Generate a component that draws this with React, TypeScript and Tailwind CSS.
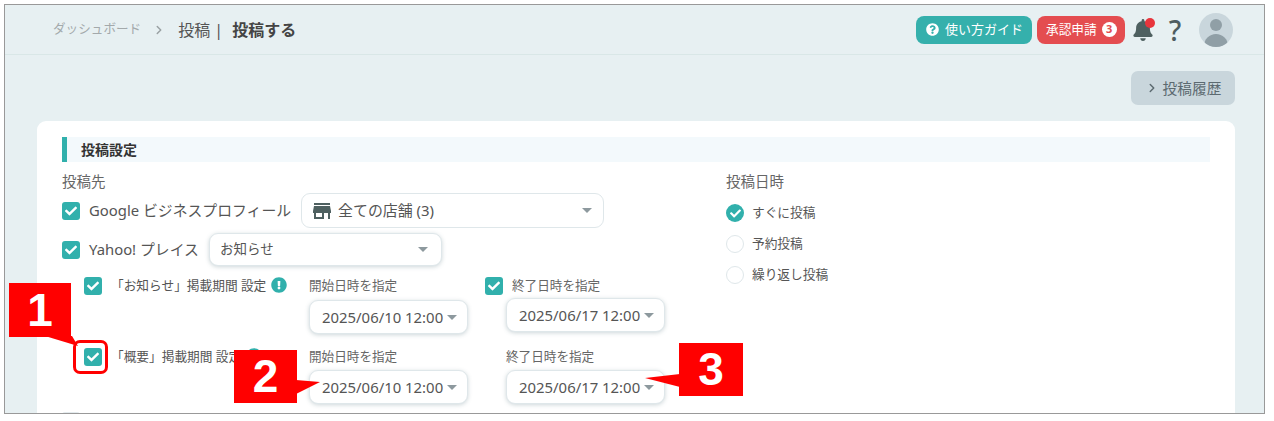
import React from 'react';
import { FaBell, FaCheck, FaExclamationCircle, FaQuestionCircle } from 'react-icons/fa';
import { MdStore } from 'react-icons/md';
import { ChevronRight } from 'lucide-react';

const fieldStyles = "flex items-center bg-white border border-[#dfe7ea] rounded-[9px] shadow-[0_1px_4px_rgba(90,120,130,0.3)] text-[#555]";

const Caret: React.FC = () => (
  <span className="w-0 h-0 border-x-[5px] border-x-transparent border-t-[5px] border-t-[#8d999e]" />
);

const Check: React.FC<{ faint?: boolean }> = ({ faint }) => (
  <span className={`flex items-center justify-center w-[18px] h-[18px] shrink-0 rounded-[3px] text-white ${faint ? 'bg-[#e4ebee]' : 'bg-[#31b0ac]'}`}>
    <FaCheck size={12} />
  </span>
);

const DateField: React.FC<{ value: string }> = ({ value }) => (
  <div className={`${fieldStyles} w-[159px] h-[34px] pl-[12px] pr-[10px] justify-between text-[14.9px]`}>
    <span>{value}</span>
    <Caret />
  </div>
);

const Radio: React.FC<{ label: string; checked?: boolean }> = ({ label, checked }) => (
  <div className="flex items-center gap-2 h-[18px] text-[12.7px] text-[#555]">
    {checked ? (
      <span className="flex items-center justify-center w-[18px] h-[18px] rounded-full bg-[#31b0ac] text-white">
        <FaCheck size={11} />
      </span>
    ) : (
      <span className="w-[18px] h-[18px] rounded-full bg-white border border-[#dfe7ea]" />
    )}
    <span>{label}</span>
  </div>
);

const Badge: React.FC<{ n: string; className: string }> = ({ n, className }) => (
  <div className={`absolute flex items-center justify-center bg-[#ff0000] text-white font-bold text-[46px] font-['Liberation_Sans',sans-serif] ${className}`}>
    {n}
  </div>
);

export default function App() {
  return (
    <div className="relative w-[1274px] h-[421px] bg-white overflow-hidden font-['Noto_Sans','Noto_Sans_CJK_JP',sans-serif]">
      <div className="absolute left-[4px] top-[4px] w-[1261px] h-[410px] border border-[#999] bg-[#e7f0f2] overflow-hidden">
        {/* header */}
        <div className="flex items-center justify-between h-[50px] pl-[48px] pr-[31px] border-b border-[#d9e7e7]">
          <div className="flex items-center">
            <span className="text-[12.6px] text-[#a3a9ab]">ダッシュボード</span>
            <ChevronRight size={14} strokeWidth={2.5} className="ml-[11px] mr-[12px] text-[#9aa1a3]" />
            <span className="text-[16px] text-[#555]">投稿 |</span>
            <span className="ml-[9px] text-[16px] font-bold text-[#444]">投稿する</span>
          </div>
          <div className="flex items-center">
            <div className="flex items-center gap-[6px] h-[28px] w-[116px] pl-[10px] rounded-[8px] bg-[#35b0ac] text-white text-[13px]">
              <FaQuestionCircle size={13} />
              <span>使い方ガイド</span>
            </div>
            <div className="flex items-center gap-[5px] h-[28px] w-[88px] ml-[5px] pl-[9px] rounded-[8px] bg-[#e44d50] text-white text-[12.7px]">
              <span>承認申請</span>
              <span className="flex items-center justify-center w-[15px] h-[15px] rounded-full bg-white text-[#e44d50] text-[11px] font-bold">3</span>
            </div>
            <div className="relative ml-[7px] w-[23px]">
              <FaBell size={22} className="text-[#4e6060]" />
              <span className="absolute -top-[1px] right-0 w-[10px] h-[10px] rounded-full bg-[#e8353c]" />
            </div>
            <span className="ml-[11px] w-[18px] text-center text-[28px] leading-none font-medium text-[#4e5c5f]">?</span>
            <div className="relative ml-[15px] w-[34px] h-[34px] rounded-full bg-[#c9d6dc] overflow-hidden">
              <span className="absolute left-[11px] top-[6px] w-[12px] h-[12px] rounded-full bg-[#909fa6]" />
              <span className="absolute left-[5px] top-[21px] w-[24px] h-[16px] rounded-t-[12px] bg-[#909fa6]" />
            </div>
          </div>
        </div>

        <div className="flex justify-end mt-[16px] mr-[29px]">
          <div className="flex items-center justify-center gap-[4px] w-[104px] h-[34px] rounded-[7px] bg-[#c9d6dc] text-[#5c6a70] text-[14.7px]">
            <ChevronRight size={14} strokeWidth={2.5} />
            <span>投稿履歴</span>
          </div>
        </div>

        {/* main card */}
        <div className="mt-[16px] ml-[32px] mr-[29px] h-[320px] pt-[16px] px-[25px] bg-white rounded-[9px]">
          <div className="flex items-center h-[25px] pl-[14px] border-l-[5px] border-[#31b0ac] bg-[#f3f9fc] text-[14px] font-bold text-[#333]">
            投稿設定
          </div>
          <div className="flex">
            <div className="w-[664px] shrink-0">
              <div className="mt-[9px] h-[20px] leading-[20px] text-[14.5px] text-[#666]">投稿先</div>
              <div className="flex items-center mt-[2px] h-[35px]">
                <Check />
                <span className="ml-[9px] text-[14.85px] text-[#555]">Google ビジネスプロフィール</span>
                <div className="flex items-center justify-between ml-[10px] w-[303px] h-[35px] pl-[8px] pr-[11px] bg-white border border-[#dfe7ea] rounded-[9px] text-[#555]">
                  <div className="flex items-center gap-[4px] text-[14.9px]">
                    <MdStore size={24} className="text-[#4e6060]" />
                    <span>全ての店舗 (3)</span>
                  </div>
                  <Caret />
                </div>
              </div>
              <div className="flex items-center mt-[5px] h-[33px]">
                <Check />
                <span className="ml-[9px] text-[14.85px] text-[#555]">Yahoo! プレイス</span>
                <div className={`${fieldStyles} ml-[10px] w-[233px] h-[33px] pl-[10px] pr-[13px] justify-between text-[13.5px]`}>
                  <span>お知らせ</span>
                  <Caret />
                </div>
              </div>

              {/* period rows */}
              <div className="flex mt-[10px] ml-[22px]">
                <div className="flex items-center w-[225px] h-[20px] text-[12.7px] text-[#555]">
                  <Check />
                  <span className="ml-[9px]">「お知らせ」掲載期間 設定</span>
                  <FaExclamationCircle size={16} className="ml-[5px] -mt-[3px] text-[#31b0ac]" />
                </div>
                <div className="w-[176px]">
                  <div className="h-[20px] leading-[20px] text-[12.6px] text-[#666]">開始日時を指定</div>
                  <div className="mt-[4px]"><DateField value="2025/06/10 12:00" /></div>
                </div>
                <div>
                  <div className="flex items-center gap-[9px] h-[20px] text-[12.6px] text-[#666]">
                    <Check />
                    <span>終了日時を指定</span>
                  </div>
                  <div className="mt-[2px] ml-[21px]"><DateField value="2025/06/17 12:00" /></div>
                </div>
              </div>
              <div className="flex mt-[13px] ml-[22px]">
                <div className="flex items-center w-[225px] h-[20px] text-[12.7px] text-[#555]">
                  <Check />
                  <span className="ml-[9px]">「概要」掲載期間 設定</span>
                  <FaExclamationCircle size={16} className="ml-[5px] -mt-[3px] text-[#31b0ac]" />
                </div>
                <div className="w-[176px]">
                  <div className="h-[20px] leading-[20px] text-[12.6px] text-[#666]">開始日時を指定</div>
                  <div className="mt-[3px]"><DateField value="2025/06/10 12:00" /></div>
                </div>
                <div>
                  <div className="h-[20px] leading-[20px] ml-[21px] text-[12.6px] text-[#666]">終了日時を指定</div>
                  <div className="mt-[3px] ml-[21px]"><DateField value="2025/06/17 12:00" /></div>
                </div>
              </div>
              <div className="mt-[8px]"><Check faint /></div>
            </div>

            <div>
              <div className="mt-[9px] h-[20px] leading-[20px] text-[14.5px] text-[#666]">投稿日時</div>
              <div className="flex flex-col gap-[13px] mt-[13px]">
                <Radio label="すぐに投稿" checked />
                <Radio label="予約投稿" />
                <Radio label="繰り返し投稿" />
              </div>
            </div>
          </div>
        </div>
      </div>

      {/* annotations */}
      <div className="absolute left-[73px] top-[340px] w-[35px] h-[34px] border-[3px] border-[#ff0000] rounded-[7px]" />
      <svg className="absolute left-0 top-0" width="1274" height="421">
        <polygon points="45,336 72,336 78,346" fill="#ff0000" />
        <polygon points="296,380 296,394 320,382" fill="#ff0000" />
        <polygon points="680,374 680,387 645,378" fill="#ff0000" />
      </svg>
      <Badge n="1" className="left-[9px] top-[283px] w-[62px] h-[54px]" />
      <Badge n="2" className="left-[234px] top-[350px] w-[63px] h-[53px]" />
      <Badge n="3" className="left-[679px] top-[343px] w-[64px] h-[53px]" />
    </div>
  );
}
